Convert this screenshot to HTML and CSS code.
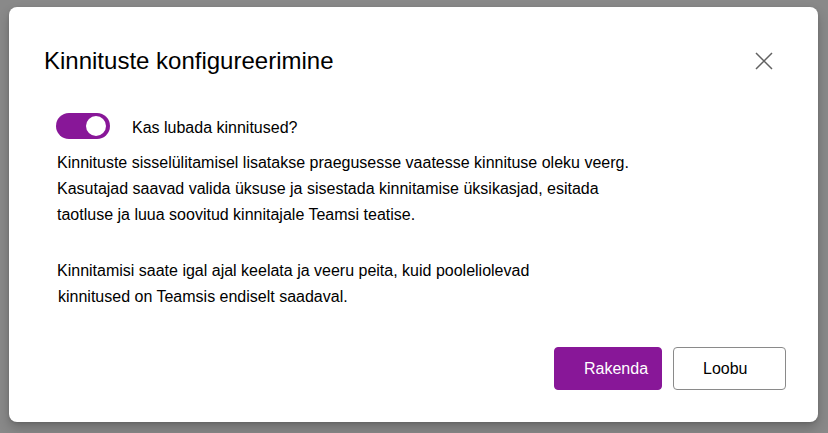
FILE: index.html
```html
<!DOCTYPE html>
<html lang="et">
<head>
<meta charset="utf-8">
<title>Kinnituste konfigureerimine</title>
<link rel="stylesheet" href="styles.css">
</head>
<body>
<div class="dialog">
  <div class="header">
    <h1 class="title">Kinnituste konfigureerimine</h1>
    <button class="close" aria-label="Sulge">
      <svg width="20" height="20" viewBox="0 0 20 20"><path d="M2 2 L18 18 M18 2 L2 18" stroke="#616161" stroke-width="1.5" fill="none"/></svg>
    </button>
  </div>
  <div class="content">
    <div class="toggle-row">
      <span class="toggle"><span class="knob"></span></span>
      <span class="label">Kas lubada kinnitused?</span>
    </div>
    <p class="para first">Kinnituste sisselülitamisel lisatakse praegusesse vaatesse kinnituse oleku veerg.<br>Kasutajad saavad valida üksuse ja sisestada kinnitamise üksikasjad, esitada<br>taotluse ja luua soovitud kinnitajale Teamsi teatise.</p>
    <p class="para second">Kinnitamisi saate igal ajal keelata ja veeru peita, kuid pooleliolevad<br><span class="indent">kinnitused on Teamsis endiselt saadaval.</span></p>
  </div>
  <div class="footer">
    <button class="btn primary">Rakenda</button>
    <button class="btn secondary">Loobu</button>
  </div>
</div>
</body>
</html>
```

FILE: styles.css
```css
html, body {
  margin: 0;
  padding: 0;
}
body {
  background: #898989;
  font-family: "Liberation Sans", Arial, sans-serif;
  color: #000;
  width: 828px;
  height: 433px;
  overflow: hidden;
}
.dialog {
  box-sizing: border-box;
  margin: 7px 10px 0 9px;
  width: 809px;
  height: 415px;
  background: #fff;
  border-radius: 8px;
  box-shadow: 0 6px 12px rgba(0, 0, 0, 0.22), 0 1px 3px rgba(0, 0, 0, 0.12);
  padding: 38px 32px 32px 35px;
  display: flex;
  flex-direction: column;
}
.header {
  display: flex;
  align-items: center;
  justify-content: space-between;
  height: 32px;
  padding-right: 12px;
}
.title {
  margin: 0;
  font-size: 24px;
  line-height: 32px;
  font-weight: normal;
}
.close {
  border: 0;
  background: none;
  padding: 0;
  width: 20px;
  height: 20px;
  display: flex;
}
.content {
  padding-left: 12px;
  margin-top: 36px;
}
.toggle-row {
  display: flex;
  align-items: center;
  height: 26px;
}
.toggle {
  box-sizing: border-box;
  width: 54px;
  height: 26px;
  border-radius: 13px;
  background: #881798;
  display: flex;
  align-items: center;
  justify-content: flex-end;
  padding-right: 4px;
}
.knob {
  width: 20px;
  height: 20px;
  border-radius: 50%;
  background: #fff;
}
.label {
  margin-left: 22px;
  font-size: 16px;
  line-height: 26px;
  padding-top: 3px;
}
.para {
  margin: 0;
  font-size: 16px;
  line-height: 26px;
  white-space: nowrap;
}
.first {
  margin-top: 11px;
  margin-left: 1px;
}
.second {
  margin-top: 30px;
  margin-left: 1px;
}
.indent {
  padding-left: 1px;
}
.footer {
  margin-top: auto;
  display: flex;
  justify-content: flex-end;
  gap: 11px;
}
.btn {
  box-sizing: border-box;
  height: 43px;
  border-radius: 4px;
  font-family: "Liberation Sans", Arial, sans-serif;
  font-size: 16px;
  text-align: left;
  padding: 0 0 0 29px;
}
.primary {
  width: 108px;
  background: #881798;
  color: #fff;
  border: 1px solid #881798;
}
.secondary {
  width: 113px;
  background: #fff;
  color: #000;
  border: 1px solid #8a8a8a;
}
```
